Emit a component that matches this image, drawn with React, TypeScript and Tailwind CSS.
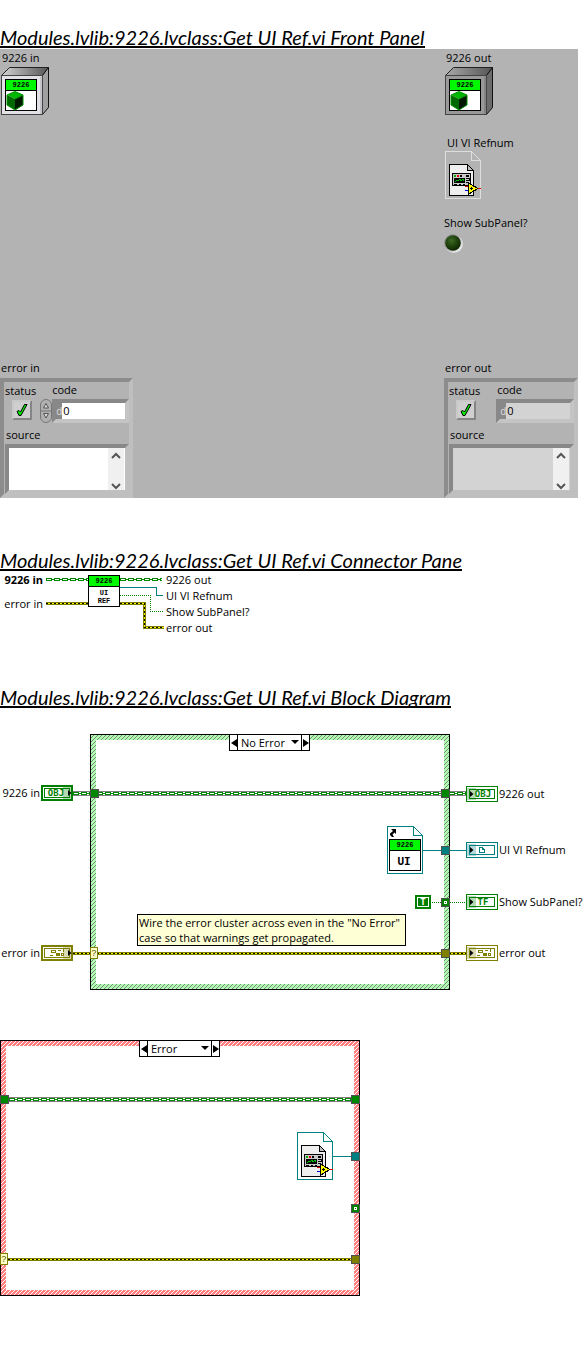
import React, { useId } from "react";

const PIXEL = "'Liberation Mono', monospace";
const PIXEL_WIDE = "'DejaVu Sans Mono', monospace";

function Title({ children }: { children: React.ReactNode }) {
  return (
    <h2 className="inline-block h-[22px] overflow-y-clip border-b-2 border-black align-top font-['Lato',sans-serif] text-[20px] leading-[22px] whitespace-nowrap italic">
      {children}
    </h2>
  );
}

/* ---------- shared icons ---------- */

function ClassCube({ light }: { light?: boolean }) {
  const id = useId();
  const face = light ? "#e2e2e6" : "#999999";
  return (
    <svg width="48" height="48" viewBox="0 0 48 48" className="block" aria-hidden="true">
      <defs>
        <linearGradient id={id} x1="0" y1="0" x2="1" y2="0">
          <stop offset="0" stopColor={light ? "#d4d4d4" : "#a8a8a8"} />
          <stop offset="1" stopColor="#555" />
        </linearGradient>
      </defs>
      <path d="M0.5 8.5 L8.5 0.5 H47.5 L41.5 8.5Z" fill={`url(#${id})`} stroke="#222" />
      <path d="M41.5 8.5 L47.5 0.5 V40.5 L41.5 47.5Z" fill={light ? "#a0a0a0" : "#6c6c6c"} stroke="#111" />
      <rect x="0.5" y="8.5" width="41" height="39" fill={face} stroke="#444" />
      <path d="M40 9.500V47" stroke={light ? "#c4c4c8" : "#858585"} strokeWidth="2" />
      <rect x="4.500" y="12.500" width="31" height="31" fill="#fff" stroke="#000" />
      <rect x="5" y="13" width="30" height="10" fill="#00f800" />
      <path d="M5 23.500H35" stroke="#000" />
      <text x="20" y="20" textAnchor="middle" fontFamily={PIXEL} fontSize="7" fontWeight="700">9226</text>
      <path d="M14 24.500 L22 28 L14 32 L6 28Z" fill="#00b800" />
      <path d="M6 28 L14 32 V43 L6 38Z" fill="#006800" />
      <path d="M22 28 L14 32 V43 L22 38Z" fill="#001800" />
      <path d="M14 24.500 L22 28 V38 L14 43 L6 38 V28Z M14 32 L22 28" fill="none" stroke="#009000" />
    </svg>
  );
}

function RefnumDoc({ stroke, fill }: { stroke: string; fill: string }) {
  return (
    <svg width="36" height="48" viewBox="0 0 36 48" className="block" aria-hidden="true" shapeRendering="crispEdges">
      <path d="M0.500 0.500 H26.500 L35.500 9.500 V47.500 H0.500Z" fill={fill} stroke={stroke} />
      <path d="M26.500 0.500 V9.500 H35.500" fill="none" stroke={stroke} />
      <path d="M4.500 13.500 H22.500 L28.500 19.500 V44.500 H4.500Z" fill="#eeeeee" stroke="#000" />
      <path d="M22.500 13.500 V19.500 H28.500Z" fill="#bbb" stroke="#000" />
      <rect x="7.500" y="22.500" width="18" height="12" fill="#c8c8c8" stroke="#000" />
      <rect x="9" y="24" width="2" height="2" fill="#00a800" />
      <rect x="12" y="24" width="2" height="2" fill="#e00000" />
      <rect x="15" y="24" width="2" height="2" fill="#000" />
      <rect x="21" y="24" width="3" height="2" fill="#000" />
      <rect x="9" y="27" width="11" height="5" fill="#000" />
      <path d="M10 31 L12 29 L13 30 L15 28 L16 30 L18 28 L19 30" fill="none" stroke="#00c000" />
      <path d="M21 27.500h3v2h-3M21 31.500h3M9 33.500h3M14 33.500h2M18 33.500h2" fill="none" stroke="#000" />
      <path d="M20 35.500h3" stroke="#e00000" />
      <path d="M20 39.500h3" stroke="#0000e0" />
      <path d="M23 31 L34 37.500 L23 44Z" fill="#000" />
      <path d="M24 33 L32 37.500 L24 42Z" fill="#ffff00" />
      <path d="M25 37.500h3M26.500 36v3" stroke="#000" />
      <path d="M33 37.500h3" stroke="#e00000" />
    </svg>
  );
}

function Led() {
  const id = useId();
  return (
    <svg width="20" height="20" viewBox="0 0 20 20" className="block" role="img" aria-label="off">
      <defs>
        <radialGradient id={id} cx="0.4" cy="0.35" r="0.65">
          <stop offset="0" stopColor="#3f6a26" />
          <stop offset="0.5" stopColor="#23470f" />
          <stop offset="1" stopColor="#102604" />
        </radialGradient>
        <linearGradient id={`${id}r`} x1="0" y1="0" x2="1" y2="1">
          <stop offset="0.2" stopColor="#8c8c8c" />
          <stop offset="0.8" stopColor="#e8e8e8" />
        </linearGradient>
      </defs>
      <circle cx="9.500" cy="9.500" r="9.500" fill={`url(#${id}r)`} />
      <circle cx="9" cy="9" r="7.800" fill={`url(#${id})`} />
    </svg>
  );
}

/* ---------- front panel ---------- */

function ErrorCluster({ title, indicator }: { title: string; indicator?: boolean }) {
  const id = useId();
  const field = indicator ? "bg-[#d3d3d3]" : "bg-white";
  return (
    <fieldset className={indicator ? "w-[134px]" : "w-[133px]"}>
      <legend className="mb-0.5 h-4 pl-px">{title}</legend>
      <div className="border-4 border-t-[#8c8c8c] border-r-[#bfbfbf] border-b-[#bfbfbf] border-l-[#8c8c8c]">
        <div className={indicator ? "flex gap-4" : "flex gap-1"}>
          <div className="flex flex-col pl-px">
            <label htmlFor={`${id}s`} className="mt-px h-4">status</label>
            <span className="relative mt-px ml-[7px] block size-5">
              <input
                id={`${id}s`}
                type="checkbox"
                readOnly
                className="block size-5 appearance-none border-2 border-t-[#c9c9c9] border-r-[#858585] border-b-[#858585] border-l-[#c9c9c9] bg-[#cfcfcf]"
              />
              <svg width="12" height="14" viewBox="0 0 12 14" className="pointer-events-none absolute top-[3px] left-1" aria-hidden="true">
                <path d="M1 8.500 L3 7.500 L4.500 9 L8.500 1.500 H11 L5 12.500 H3Z" fill="#00e800" stroke="#000" />
              </svg>
            </span>
          </div>
          <div className="flex flex-1 flex-col">
            <label htmlFor={`${id}c`} className={indicator ? "h-4 pl-px" : "ml-3 h-4"}>code</label>
            <div className="mt-px flex items-center">
              {!indicator && (
                <svg width="12" height="24" viewBox="0 0 12 24" className="block" aria-hidden="true">
                  <rect x="0.500" y="0.500" width="11" height="23" rx="5.500" fill="#b0b0b0" stroke="#777" />
                  <path d="M1 12H11" stroke="#777" />
                  <path d="M3.500 9 L6 4.500 L8.500 9Z M3.500 14.500 H8.500 L6 19Z" fill="#ddd" stroke="#555" />
                </svg>
              )}
              <div className="flex h-6 flex-1 border-4 border-t-[#888] border-r-[#c4c4c4] border-b-[#c4c4c4] border-l-[#888]">
                <span className="w-1.5 bg-[#888] text-[10px] leading-4 text-[#ddd]">d</span>
                <input id={`${id}c`} defaultValue="0" readOnly={indicator} className={`w-0 flex-1 pl-px leading-4 outline-none ${field}`} />
              </div>
            </div>
          </div>
        </div>
        <label htmlFor={`${id}t`} className="mt-1 ml-0.5 block h-4">source</label>
        <div className={`mt-px ml-px flex h-[50px] border-4 border-t-[#888] border-r-[#bfbfbf] border-b-[#bfbfbf] border-l-[#888] ${field}`}>
          <textarea id={`${id}t`} readOnly={indicator} className="h-full w-0 flex-1 resize-none outline-none" />
          <div className="mr-px flex w-4 flex-col justify-between bg-[#f0f0f0]">
            {["M1 6 L5 2 L9 6", "M1 2 L5 6 L9 2"].map((d, i) => (
              <button
                key={d}
                type="button"
                aria-label={i ? "Scroll down" : "Scroll up"}
                className={i ? "flex h-4 items-end justify-center" : "flex h-4 items-center justify-center"}
              >
                <svg width="10" height="8" viewBox="0 0 10 8" aria-hidden="true">
                  <path d={d} fill="none" stroke="#555" strokeWidth="2" />
                </svg>
              </button>
            ))}
          </div>
        </div>
      </div>
    </fieldset>
  );
}

function FrontPanel() {
  return (
    <div className="mr-[9px] mt-px flex justify-between bg-[#b3b3b3] pt-px">
      <div className="flex flex-col justify-between">
        <div className="pl-px">
          <p className="h-4 pl-px">9226 in</p>
          <div className="mt-px"><ClassCube light /></div>
        </div>
        <ErrorCluster title="error in" />
      </div>
      <div className="flex w-[134px] flex-col">
        <div className="pl-px">
          <p className="h-4 pl-px">9226 out</p>
          <div className="mt-px"><ClassCube /></div>
          <p className="mt-5 h-4 pl-0.5">UI VI Refnum</p>
          <RefnumDoc stroke="#dedede" fill="#b3b3b3" />
        </div>
        <p className="mt-4 mb-[3px] h-4">Show SubPanel?</p>
        <Led />
        <div className="mt-[106px]"><ErrorCluster title="error out" indicator /></div>
      </div>
    </div>
  );
}

/* ---------- wires ---------- */

function ClassWire({ x, y, w, cased }: { x: number; y: number; w: number; cased?: boolean }) {
  const m = y + 0.5;
  return (
    <g shapeRendering="crispEdges">
      {cased && <rect x={x} y={y - 2} width={w} height="5" fill="#808080" />}
      <rect x={x} y={y - 1} width={w} height="3" fill="#fff" />
      <path d={`M${x} ${m}H${x + w}`} stroke="#008800" strokeWidth="3" strokeDasharray="6 2" />
      <path d={`M${x} ${m}H${x + w}`} stroke="#008800" />
      <path d={`M${x} ${m}H${x + w}`} stroke="#fff" strokeDasharray="4 4" strokeDashoffset="-1" />
    </g>
  );
}

function ErrorWire({ d }: { d: string }) {
  return (
    <g fill="none" shapeRendering="crispEdges">
      <path d={d} stroke="#808000" strokeWidth="3" />
      <path d={d} stroke="#ffff00" />
      <path d={d} stroke="#000" strokeDasharray="2 2" />
    </g>
  );
}

function BoolWire({ d }: { d: string }) {
  return <path d={d} fill="none" stroke="#008000" strokeDasharray="1 1" shapeRendering="crispEdges" />;
}

function Tunnel({ x, y, fill, hollow }: { x: number; y: number; fill: string; hollow?: boolean }) {
  return (
    <g shapeRendering="crispEdges">
      <rect x={x + 0.5} y={y + 0.5} width="8" height="8" fill={fill} stroke="#505050" />
      {hollow && <rect x={x + 3} y={y + 3} width="3" height="3" fill="#fff" />}
      {hollow && <rect x={x + 4} y={y + 4} width="1" height="1" fill="#008000" />}
    </g>
  );
}

function SelectorTunnel({ x, y }: { x: number; y: number }) {
  return (
    <g>
      <rect x={x + 0.5} y={y + 0.5} width="7" height="11" fill="#ffffc8" stroke="#808000" />
      <text x={x + 4} y={y + 9} textAnchor="middle" fontFamily={PIXEL} fontSize="9" fill="#606000">?</text>
    </g>
  );
}

function Hatch({ base, line }: { base: string; line: string }) {
  const id = useId();
  return (
    <g shapeRendering="crispEdges">
      <defs>
        <pattern id={id} width="4" height="4" patternUnits="userSpaceOnUse" patternTransform="translate(0 1)">
          <rect width="4" height="4" fill={base} />
          <path d="M3 0h1v1h-1zM2 1h1v1h-1zM1 2h1v1h-1zM0 3h1v1h-1z" fill={line} />
        </pattern>
      </defs>
      <path d="M0 0H360V256H0Z M6 6V250H354V6Z" fill={`url(#${id})`} fillRule="evenodd" />
      <rect x="0.500" y="0.500" width="359" height="255" fill="none" stroke="#000" />
    </g>
  );
}

/* ---------- connector pane ---------- */

function ConnectorPane() {
  return (
    <div className="mt-px flex leading-4">
      <div className="flex w-[43px] flex-col items-end gap-2">
        <p className="font-bold">9226 in</p>
        <p>error in</p>
      </div>
      <svg width="122" height="64" viewBox="43 572 122 64" className="block" aria-hidden="true">
        <ClassWire x={46} y={579} w={42} />
        <ClassWire x={120} y={579} w={42} />
        <path d="M120 587.500H156.500V595.500H163" fill="none" stroke="#008080" shapeRendering="crispEdges" />
        <BoolWire d="M120 595.500H150.500V611.500H163" />
        <ErrorWire d="M46 603.500H88" />
        <ErrorWire d="M120 603.500H144.500V627.500H164" />
        <rect x="88.500" y="575.500" width="31" height="31" fill="#fff" stroke="#000" />
        <rect x="89" y="576" width="30" height="10" fill="#00f800" />
        <path d="M89 586.500H119" stroke="#000" />
        <g textAnchor="middle" fontFamily={PIXEL} fontSize="7" fontWeight="700">
          <text x="104" y="583">9226</text>
          <text x="104" y="595">UI</text>
          <text x="104" y="603">REF</text>
        </g>
      </svg>
      <div className="pl-px">
        <p>9226 out</p>
        <p>UI VI Refnum</p>
        <p>Show SubPanel?</p>
        <p>error out</p>
      </div>
    </div>
  );
}

/* ---------- block diagram ---------- */

type Glyph = "obj" | "tf" | "ref" | "cluster";

function TerminalIcon({ color, glyph, control }: { color: string; glyph: Glyph; control?: boolean }) {
  const cx = control ? 15 : 17;
  return (
    <svg width="32" height="16" viewBox="0 0 32 16" className="block shrink-0" aria-hidden="true">
      <g shapeRendering="crispEdges">
        <rect width="32" height="16" fill={color} />
        <rect x={control ? 2 : 1} y={control ? 2 : 1} width={control ? 28 : 30} height={control ? 12 : 14} fill="#fff" />
        <rect x="3.500" y="3.500" width="25" height="9" fill="#fff" stroke={color} />
      </g>
      {(glyph === "obj" || glyph === "tf") && (
        <text x={cx} y="11" textAnchor="middle" fontFamily={PIXEL_WIDE} fontSize="9" fontWeight="700" fill={color}>
          {glyph === "obj" ? "OBJ" : "TF"}
        </text>
      )}
      {glyph === "ref" && (
        <path d="M13.500 5.500h3l2 2v3h-5zM16.500 5.500v2h2" fill="none" stroke={color} shapeRendering="crispEdges" />
      )}
      {glyph === "cluster" && (
        <g transform={`translate(${cx - 14} 0)`} shapeRendering="crispEdges">
          <path d="M9 5.500h4v2h-4zM16 5.500h3M21 4v3M19.500 8.500h2v2h-2zM8 10h3" fill="none" stroke={color} />
          <rect x="14" y="8" width="4" height="3" fill={color} />
        </g>
      )}
      <g shapeRendering="crispEdges">
        <rect x={control ? 22 : 1} y="2" width="9" height="12" fill={color} fillOpacity="0.3" />
      </g>
      <path d={control ? "M27 5V11L30.500 8Z" : "M4 5V11L7.500 8Z"} fill="#000" />
    </svg>
  );
}

interface TerminalProps {
  label: string;
  color: string;
  glyph: Glyph;
  control?: boolean;
  place: string;
}

function Terminal({ label, color, glyph, control, place }: TerminalProps) {
  return (
    <div className={`absolute flex items-center leading-4 whitespace-nowrap ${control ? "w-[73px] justify-end gap-px" : "gap-px"} ${place}`}>
      {control && <span>{label}</span>}
      <TerminalIcon color={color} glyph={glyph} control={control} />
      {!control && <span>{label}</span>}
    </div>
  );
}

function CaseSelector({ value, place }: { value: string; place: string }) {
  return (
    <div className={`absolute flex h-[17px] w-[81px] border border-black bg-white ${place}`}>
      <button type="button" aria-label="Previous case" className="flex w-2 items-center justify-center border-r border-black">
        <svg width="6" height="8" viewBox="0 0 6 8" aria-hidden="true"><path d="M6 0V8L0 4Z" /></svg>
      </button>
      <span className="relative flex-1">
        <select aria-label="Case" defaultValue={value} className="block h-[15px] w-full appearance-none bg-transparent pl-[3px] leading-[15px] outline-none">
          <option>No Error</option>
          <option>Error</option>
        </select>
        <svg width="8" height="4" viewBox="0 0 8 4" className="pointer-events-none absolute top-[5px] right-0.5" aria-hidden="true">
          <path d="M0 0H8L4 4Z" />
        </svg>
      </span>
      <button type="button" aria-label="Next case" className="flex w-2 items-center justify-center border-l border-black">
        <svg width="6" height="8" viewBox="0 0 6 8" aria-hidden="true"><path d="M0 0V8L6 4Z" /></svg>
      </button>
    </div>
  );
}

function StaticVIRef() {
  return (
    <svg width="36" height="48" viewBox="0 0 36 48" className="absolute top-[92px] left-[387px]" aria-hidden="true">
      <g shapeRendering="crispEdges">
        <path d="M0.500 0.500 H26.500 L35.500 9.500 V47.500 H0.500Z" fill="#fff" stroke="#008080" />
        <path d="M26.500 0.500 V9.500 H35.500" fill="none" stroke="#008080" />
        <rect x="2.500" y="13.500" width="31" height="31" fill="#fff" stroke="#000" />
        <rect x="3" y="14" width="30" height="10" fill="#00f800" />
        <path d="M3 24.500H33" stroke="#000" />
      </g>
      <path d="M4 3H9V8L7.500 6.500L5.500 8.500L7 11H5L3 9V7.500L6 5Z" fill="#000" />
      <text x="18" y="21" textAnchor="middle" fontFamily={PIXEL} fontSize="7" fontWeight="700">9226</text>
      <text x="17" y="39" textAnchor="middle" fontFamily="'DejaVu Sans Mono', monospace" fontSize="11" fontWeight="700">UI</text>
    </svg>
  );
}

function NoErrorCase() {
  return (
    <div className="relative h-64">
      <svg width="587" height="256" viewBox="0 0 587 256" className="absolute top-0 left-0" aria-hidden="true">
        <g transform="translate(90 0)"><Hatch base="#b0ffb0" line="#7c857c" /></g>
        <ClassWire x={73} y={59} w={393} cased />
        <ErrorWire d="M73 219.500H466" />
        <path d="M423 116.500H466" stroke="#008080" shapeRendering="crispEdges" />
        <BoolWire d="M432 168.500H466" />
        <Tunnel x={90} y={55} fill="#008800" />
        <Tunnel x={441} y={55} fill="#008800" />
        <Tunnel x={441} y={112} fill="#008080" />
        <Tunnel x={441} y={164} fill="#008000" hollow />
        <Tunnel x={441} y={215} fill="#808000" />
        <SelectorTunnel x={90} y={213} />
        <rect x="416" y="162" width="14" height="12" fill="#fff" stroke="#008000" strokeWidth="2" />
        <rect x="418" y="164" width="10" height="8" fill="#008000" />
        <text x="423" y="171" textAnchor="middle" fontFamily={PIXEL_WIDE} fontSize="9" fontWeight="700" fill="#fff">T</text>
      </svg>
      <CaseSelector value="No Error" place="top-0 left-[229px]" />
      <StaticVIRef />
      <p className="absolute top-[180px] left-[137px] w-[269px] border border-black bg-[#ffffd5] px-px leading-[15px] whitespace-nowrap">
        Wire the error cluster across even in the "No Error"
        <br />
        case so that warnings get propagated.
      </p>
      <Terminal control label="9226 in" color="#008000" glyph="obj" place="top-[51px] left-0" />
      <Terminal control label="error in" color="#808000" glyph="cluster" place="top-[211px] left-0" />
      <Terminal label="9226 out" color="#008000" glyph="obj" place="top-[52px] left-[466px]" />
      <Terminal label="UI VI Refnum" color="#008080" glyph="ref" place="top-[108px] left-[466px]" />
      <Terminal label="Show SubPanel?" color="#008000" glyph="tf" place="top-[160px] left-[466px]" />
      <Terminal label="error out" color="#808000" glyph="cluster" place="top-[211px] left-[466px]" />
    </div>
  );
}

function ErrorCase() {
  return (
    <div className="relative mt-[50px] h-64">
      <svg width="360" height="256" viewBox="0 0 360 256" className="absolute top-0 left-0" aria-hidden="true">
        <Hatch base="#ff8080" line="#ffffff" />
        <ClassWire x={9} y={59} w={342} cased />
        <ErrorWire d="M8 219.500H351" />
        <path d="M333 116.500H351" stroke="#008080" shapeRendering="crispEdges" />
        <Tunnel x={0} y={55} fill="#008800" />
        <Tunnel x={351} y={55} fill="#008800" />
        <Tunnel x={351} y={112} fill="#008080" />
        <Tunnel x={351} y={164} fill="#008000" hollow />
        <Tunnel x={351} y={215} fill="#808000" />
        <SelectorTunnel x={0} y={213} />
      </svg>
      <CaseSelector value="Error" place="top-0 left-[139px]" />
      <div className="absolute top-[92px] left-[297px]">
        <RefnumDoc stroke="#008080" fill="#ffffff" />
      </div>
    </div>
  );
}

export default function App() {
  return (
    <main className="overflow-x-clip bg-white pt-[26px] pb-[50px] font-['Open_Sans',sans-serif] text-[11px] leading-4 text-black">
      <section>
        <Title>Modules.lvlib:9226.lvclass:Get UI Ref.vi Front Panel</Title>
        <FrontPanel />
      </section>
      <section className="mt-[51px]">
        <Title>Modules.lvlib:9226.lvclass:Get UI Ref.vi Connector Pane</Title>
        <ConnectorPane />
      </section>
      <section className="mt-[50px]">
        <Title>Modules.lvlib:9226.lvclass:Get UI Ref.vi Block Diagram</Title>
        <div className="mt-[26px]">
          <NoErrorCase />
          <ErrorCase />
        </div>
      </section>
    </main>
  );
}
